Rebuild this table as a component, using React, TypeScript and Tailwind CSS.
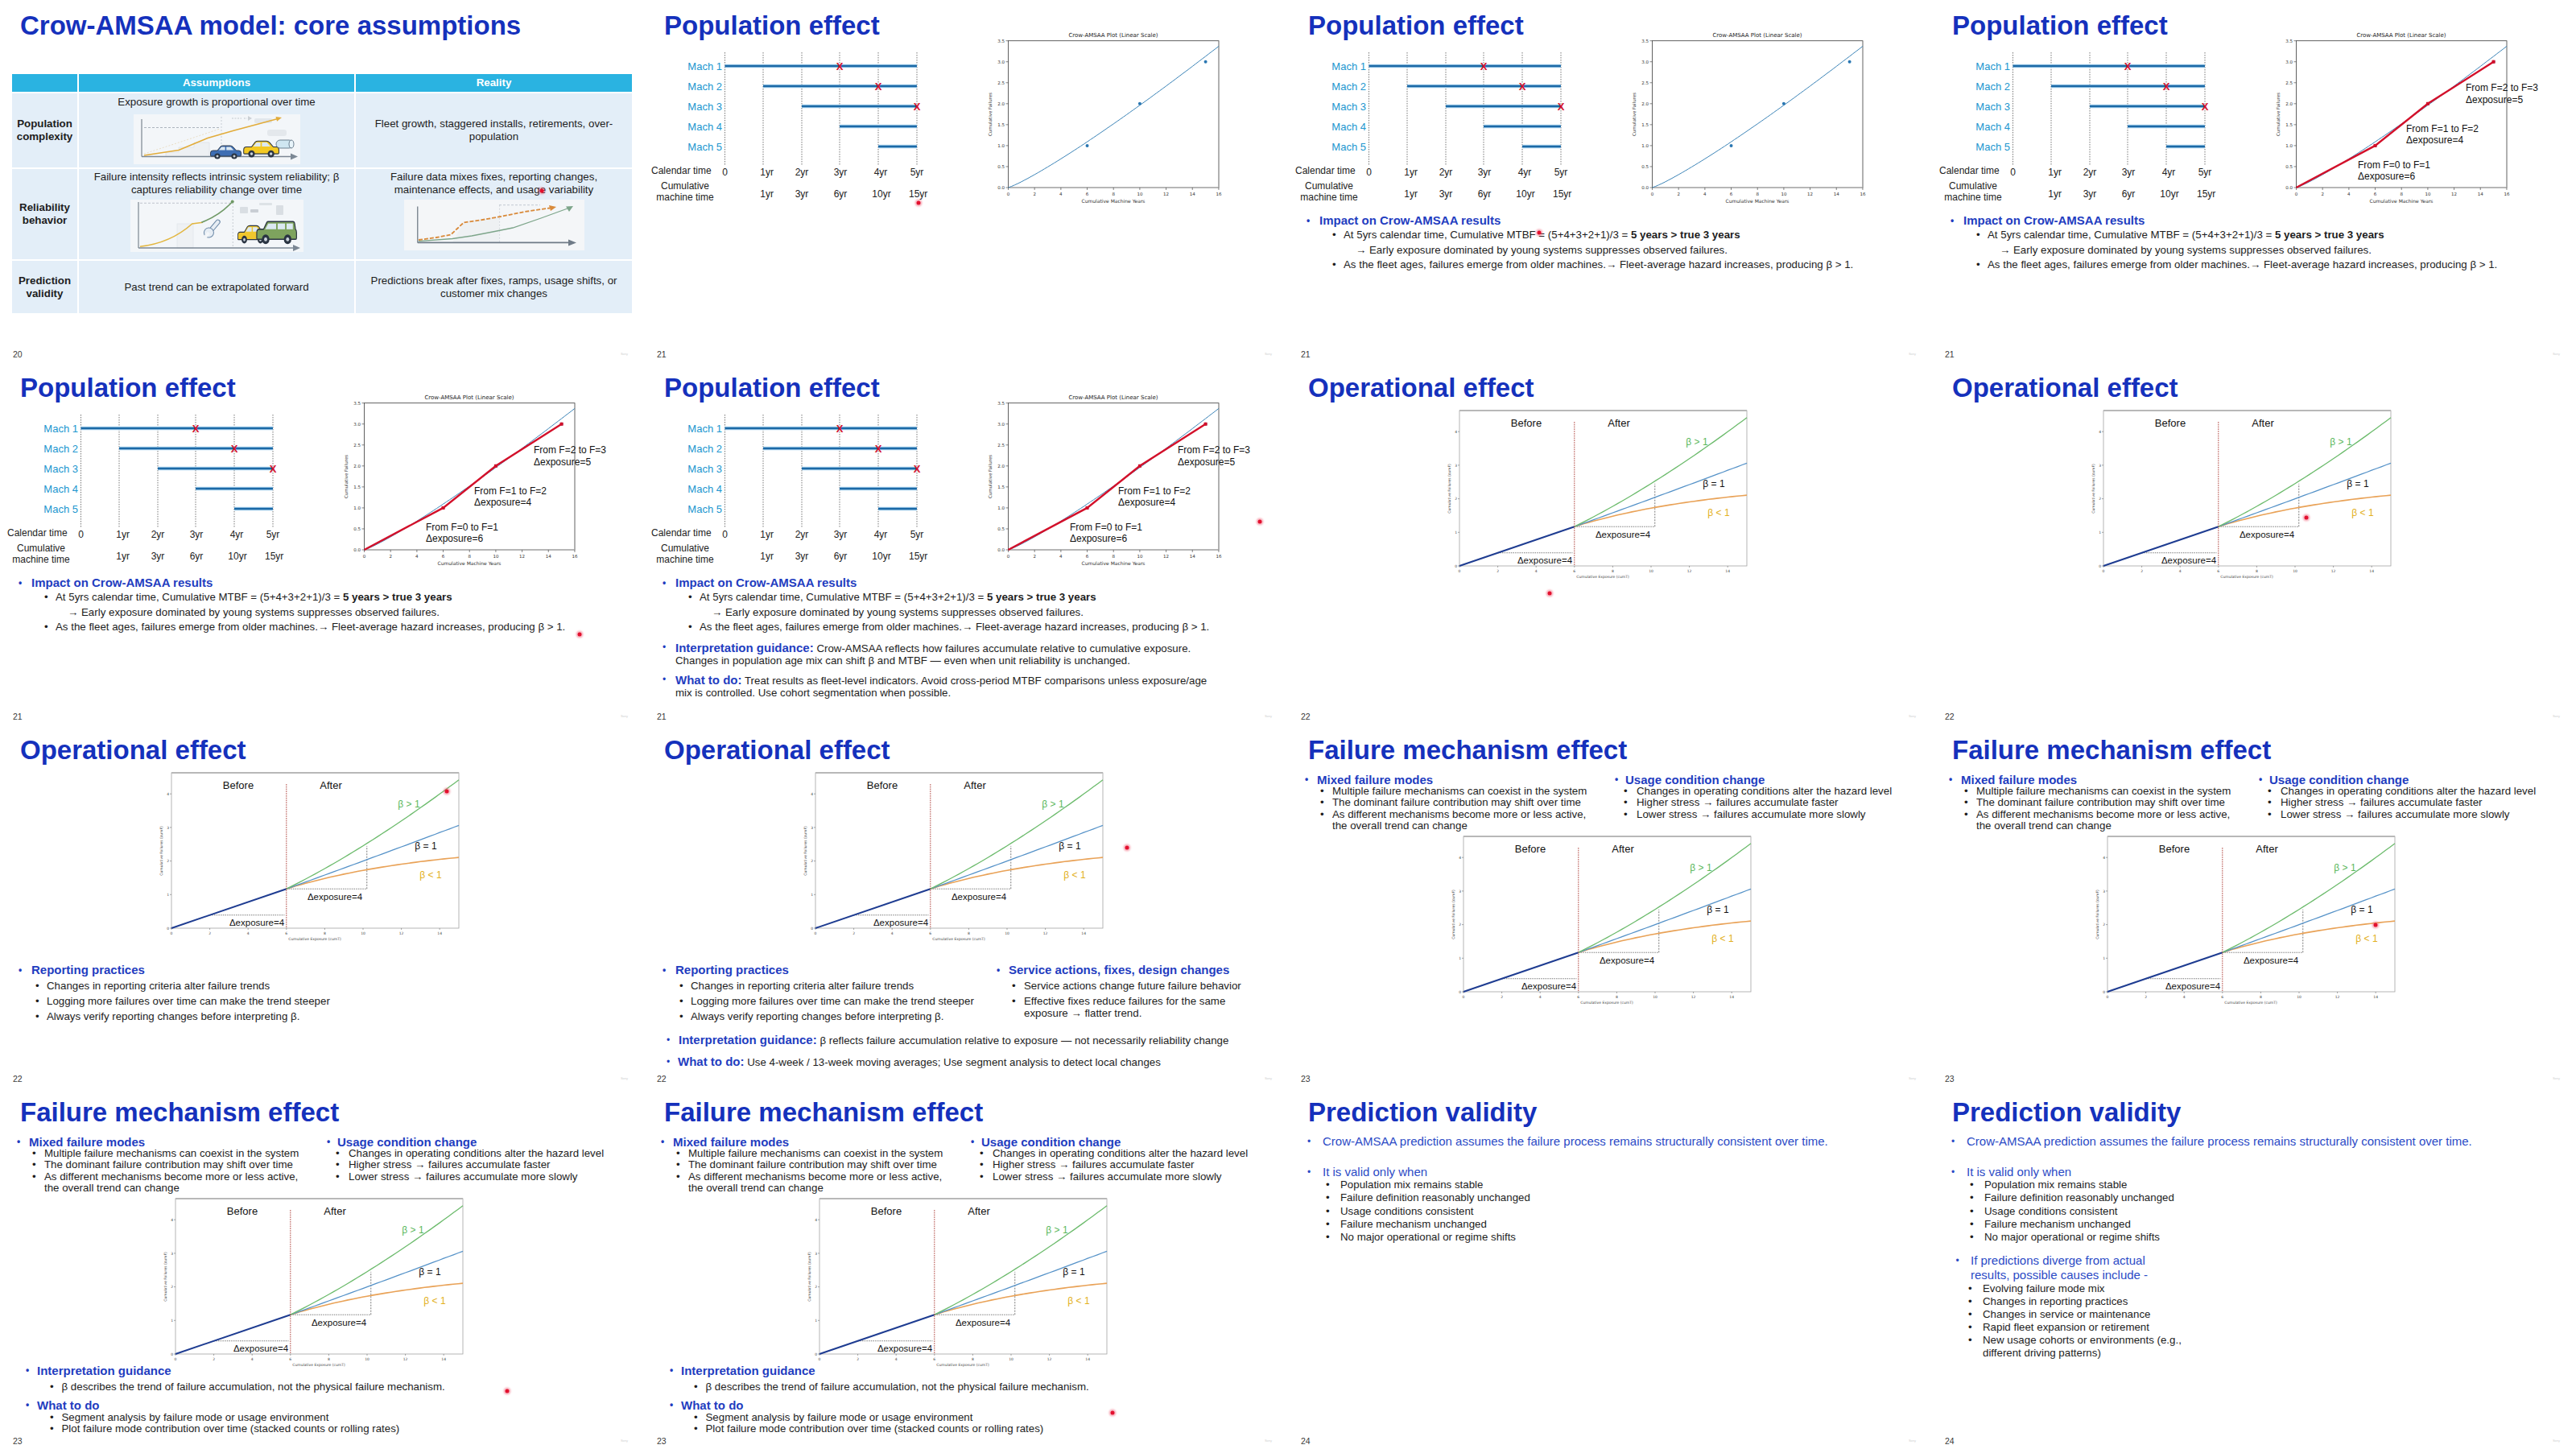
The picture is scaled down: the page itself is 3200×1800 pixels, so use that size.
import type { ReactNode } from "react";

const HEAD = "text-[15px] font-bold text-[#1f3dc0]";
const INK = "text-[#1d1d1d]";
const CELL = "flex items-center justify-center bg-[#e3eef8] text-center";
const TH = "flex items-center justify-center bg-[#2ab3e1] font-bold text-white";

function Bul({ className = "", dot, children }: { className?: string; dot: string; children: ReactNode }) {
  return (
    <div className={`flex ${className}`}>
      <span className={`shrink-0 ${dot}`}>•</span>
      <div>{children}</div>
    </div>
  );
}

function Slide({ num, dot, children }: { num: number; dot?: string; children: ReactNode }) {
  return (
    <section className="relative flex h-[450px] w-[800px] flex-col overflow-hidden bg-white">
      <div className="min-h-0 flex-1 whitespace-nowrap">{children}</div>
      <footer className="flex h-[20px] shrink-0 items-center justify-between pl-[16px] pr-[20px]">
        <span className="text-[10.5px] leading-none text-[#3a3a3a]">{num}</span>
        <span className="text-[4px] leading-none text-[#d0d0d0]">Sony</span>
      </footer>
      {dot ? (
        <span
          className={`absolute h-[5px] w-[5px] -translate-x-1/2 -translate-y-1/2 rounded-full bg-[#e3112f] shadow-[0_0_2px_2px_rgba(240,90,115,0.45)] ${dot}`}
        />
      ) : null}
    </section>
  );
}

function Title({ children }: { children: ReactNode }) {
  return <h1 className="pl-[25px] pt-[15px] text-[33px] font-bold leading-[33px] text-[#1531bc]">{children}</h1>;
}

/* ---------- small table illustrations ---------- */

const SEDAN =
  "M1.5 10Q1.5 7 4.5 7L10 7L14 2Q15 1 17 1L26 1Q28 1 29.5 2.5L33.5 7L36.5 7Q39.5 7 39.5 10L39.5 13Q39.5 14 38.5 14L2.5 14Q1.5 14 1.5 13Z";
const SUV =
  "M1.5 9Q1.5 6.5 4 6.5L8 6.5L11 1.5Q11.5 0.8 12.5 0.8L36 0.8Q37.5 0.8 37.8 2.5L38.5 6.5Q39.5 7 39.5 9L39.5 13Q39.5 14 38.5 14L2.5 14Q1.5 14 1.5 13Z";

function Car({ x, y, w, h, body, suv }: { x: number; y: number; w: number; h: number; body: string; suv?: boolean }) {
  return (
    <g transform={`translate(${x} ${y}) scale(${w / 40} ${h / 18})`}>
      <path d={suv ? SUV : SEDAN} fill={body} stroke="#2a3442" strokeWidth={0.9} />
      {suv ? (
        <>
          <path d="M12.5 2.2H20V6.5H9.6Z" fill="#dbe8f2" />
          <path d="M21.5 2.2H28.5V6.5H21.5Z" fill="#dbe8f2" />
          <path d="M30 2.2H36V6.5H30Z" fill="#dbe8f2" />
        </>
      ) : (
        <>
          <path d="M15.2 2.5H19.6V6.6H11.8Z" fill="#dbe8f2" />
          <path d="M21.2 2.5H26.5L30.4 6.6H21.2Z" fill="#dbe8f2" />
        </>
      )}
      <circle cx={10} cy={14} r={3.6} fill="#2a3442" />
      <circle cx={10} cy={14} r={1.5} fill="#c9d1d9" />
      <circle cx={31} cy={14} r={3.6} fill="#2a3442" />
      <circle cx={31} cy={14} r={1.5} fill="#c9d1d9" />
    </g>
  );
}

function GrowthArt() {
  return (
    <svg width="207" height="62" viewBox="0 0 207 62" className="mt-[7px] block">
      <rect width="207" height="62" fill="#f3f6f9" />
      <rect x="150" y="5" width="22" height="6" rx="2" fill="#e2e7ec" />
      <rect x="166" y="19" width="24" height="8" rx="3" fill="#e4e8ec" />
      <path d="M40 52V47H56V41H75V35H94V52" fill="#edf0f3" stroke="#dde2e7" strokeWidth="0.8" />
      <path d="M13 49Q60 34 107 18" fill="none" stroke="#e6d6b5" strokeWidth="0.8" strokeDasharray="2 2" />
      <line x1="13" y1="16.5" x2="106" y2="16.5" stroke="#9aa4ae" strokeWidth="0.8" strokeDasharray="3 2" />
      <line x1="109" y1="3" x2="109" y2="52" stroke="#b5bcc4" strokeWidth="0.7" strokeDasharray="2 2" />
      <path d="M122 5H134M137 5H141" stroke="#c3c9cf" strokeWidth="1.2" strokeDasharray="2 1.5" />
      <polygon points="142,2 147,5 142,8" fill="#cbd0d5" />
      <line x1="10" y1="6" x2="10" y2="52.5" stroke="#6f7b87" strokeWidth="1.1" />
      <line x1="10" y1="52.5" x2="197" y2="52.5" stroke="#7b8794" strokeWidth="1.6" />
      <polygon points="195,48.5 204,52.5 195,56.5" fill="#7b8794" />
      <polyline points="13,51 56,44.5 74,37 92,29.5 125,20 155,12 178,5.8" fill="none" stroke="#e2ac3a" strokeWidth="1.6" />
      <polygon points="184,4 178.1,8.8 176.5,3" fill="#e2ac3a" />
      <Car x={94} y={38} w={40} h={18} body="#3e6eb3" />
      <Car x={135} y={32} w={46} h={22} body="#f3c923" />
      <rect x="177" y="32" width="21" height="10" rx="5" fill="#cfe6f1" stroke="#4f6577" strokeWidth="0.8" />
      <ellipse cx="196" cy="37" rx="3" ry="5" fill="#e8f4fa" stroke="#4f6577" strokeWidth="0.8" />
    </svg>
  );
}

function FixArt() {
  return (
    <svg width="215" height="65" viewBox="0 0 215 65" className="mt-[4px] block">
      <rect width="215" height="65" fill="#f3f6f9" />
      <rect x="58" y="30" width="20" height="30" fill="#eef1f4" stroke="#e0e5ea" strokeWidth="0.7" />
      <line x1="12" y1="4.3" x2="126" y2="4.3" stroke="#b0b8c0" strokeWidth="0.8" strokeDasharray="3 2" />
      <line x1="127.3" y1="4" x2="127.3" y2="60" stroke="#b5bcc4" strokeWidth="0.7" strokeDasharray="2 2" />
      <rect x="136" y="9" width="10" height="8" rx="1" fill="#d9dee3" />
      <rect x="149" y="12" width="10" height="4" rx="1" fill="#c9ced4" />
      <rect x="160" y="4" width="16" height="3" rx="1" fill="#dde2e6" />
      <rect x="181" y="7" width="9" height="12" rx="1" fill="#d9dee3" />
      <line x1="10" y1="3" x2="10" y2="60" stroke="#6f7b87" strokeWidth="1.1" />
      <line x1="10" y1="60" x2="204" y2="60" stroke="#7b8794" strokeWidth="1.6" />
      <polygon points="202,56 211,60 202,64" fill="#7b8794" />
      <path d="M12 58.3C40 55 60 45 76.7 30L90 28.3" fill="none" stroke="#e2b63f" strokeWidth="1.6" />
      <path d="M88.3 28.3C105 22 118 12 126.7 2.5" fill="none" stroke="#6f9966" strokeWidth="1.6" />
      <circle cx="126.7" cy="2.5" r="2" fill="#6f9966" />
      <g transform="translate(100 38) rotate(-50)">
        <rect x="-2" y="-2.6" width="18" height="5.2" rx="2.6" fill="#e6edf4" stroke="#6d8aa8" strokeWidth="1" />
        <circle cx="-4" cy="0" r="6" fill="#e6edf4" stroke="#6d8aa8" strokeWidth="1" />
        <rect x="-11" y="-2" width="7" height="4" fill="#f3f6f9" />
      </g>
      <Car x={132} y={31} w={38} h={24} body="#f0c72e" />
      <Car x={155} y={26} w={52} h={30} body="#7ea35e" suv />
    </svg>
  );
}

function TrendArt() {
  return (
    <svg width="224" height="63" viewBox="0 0 224 63" className="mt-[4px] block">
      <rect width="224" height="63" fill="#f4f6f8" />
      <polygon points="60,53 74,28.5 118,21 118,53" fill="#eef1f3" />
      <line x1="118" y1="6.7" x2="169" y2="6.7" stroke="#b5bdc5" strokeWidth="0.8" strokeDasharray="3 2" />
      <line x1="118.6" y1="6.7" x2="118.6" y2="53" stroke="#c2c8ce" strokeWidth="0.7" strokeDasharray="2 2" />
      <line x1="16.8" y1="8.4" x2="16.8" y2="53.4" stroke="#5d6975" strokeWidth="1.1" />
      <line x1="16.8" y1="53.4" x2="206" y2="53.4" stroke="#6f7b87" strokeWidth="1.6" />
      <polygon points="204,49.4 214,53.4 204,57.4" fill="#6f7b87" />
      <path d="M18 51.7L60 48.5L84 45L110 40L135 35L170 23L203 11" fill="none" stroke="#7da58a" strokeWidth="1.3" />
      <polygon points="210,8 201,8.5 205,15" fill="#7da58a" />
      <path d="M18 50L40 47L58 43.5L66 36L74 28.5L94 25.6L120 21L150 15L181 10.5" fill="none" stroke="#d98a3a" strokeWidth="1.8" strokeDasharray="5 2" />
      <polygon points="189,9 180,7 182,14" fill="#d98a3a" />
    </svg>
  );
}

/* ---------- slide 20 ---------- */

function AssumptionsSlide() {
  return (
    <>
      <Title>Crow-AMSAA model: core assumptions</Title>
      <div
        className={`ml-[15px] mt-[44px] grid w-[770px] grid-cols-[81px_342px_343px] grid-rows-[22px_92px_112px_65px] gap-[2px] text-[13.3px] leading-[16px] ${INK}`}
      >
        <div className="bg-[#2ab3e1]" />
        <div className={TH}>Assumptions</div>
        <div className={TH}>Reality</div>

        <div className={`${CELL} font-bold`}>
          Population
          <br />
          complexity
        </div>
        <div className="flex flex-col items-center bg-[#e3eef8] pt-[3px]">
          <p>Exposure growth is proportional over time</p>
          <GrowthArt />
        </div>
        <div className={CELL}>
          Fleet growth, staggered installs, retirements, over-
          <br />
          population
        </div>

        <div className={`${CELL} font-bold`}>
          Reliability
          <br />
          behavior
        </div>
        <div className="flex flex-col items-center bg-[#e3eef8] pt-[2px] text-center">
          <p>
            Failure intensity reflects intrinsic system reliability; β
            <br />
            captures reliability change over time
          </p>
          <FixArt />
        </div>
        <div className="flex flex-col items-center bg-[#e3eef8] pt-[2px] text-center">
          <p>
            Failure data mixes fixes, reporting changes,
            <br />
            maintenance effects, and usage variability
          </p>
          <TrendArt />
        </div>

        <div className={`${CELL} font-bold`}>
          Prediction
          <br />
          validity
        </div>
        <div className={CELL}>Past trend can be extrapolated forward</div>
        <div className={CELL}>
          Predictions break after fixes, ramps, usage shifts, or
          <br />
          customer mix changes
        </div>
      </div>
    </>
  );
}

/* ---------- slide 21: population effect ---------- */

const GRID_X = [100.5, 148, 196, 243, 291, 339];
const MACHINES: { y: number; from: number; fail?: number }[] = [
  { y: 82, from: 100.5, fail: 243 },
  { y: 107, from: 148, fail: 291 },
  { y: 132, from: 196, fail: 339 },
  { y: 157, from: 243 },
  { y: 182, from: 291 },
];
const CAL: [string, number][] = [
  ["0", 100.5],
  ["1yr", 152.6],
  ["2yr", 196],
  ["3yr", 244],
  ["4yr", 294],
  ["5yr", 339],
];
const CUM: [string, number][] = [
  ["1yr", 152.6],
  ["3yr", 196],
  ["6yr", 244],
  ["10yr", 295],
  ["15yr", 340.7],
];

function Timeline() {
  return (
    <svg width="370" height="195" viewBox="0 60 370 195" className="mt-[12px] block">
      {GRID_X.map((x) => (
        <line key={x} x1={x} y1={65} x2={x} y2={206} stroke="#555" strokeWidth={0.8} strokeDasharray="1.5 1.5" />
      ))}
      {MACHINES.map((m, i) => (
        <g key={i}>
          <text x={97} y={m.y + 4.7} textAnchor="end" fontSize={13} fill="#2196cf">
            Mach {i + 1}
          </text>
          <line x1={m.from} y1={m.y} x2={339} y2={m.y} stroke="#a7d2ee" strokeWidth={4.6} />
          <line x1={m.from} y1={m.y} x2={339} y2={m.y} stroke="#1c69a6" strokeWidth={2.4} />
          {m.fail !== undefined && (
            <text x={m.fail} y={m.y + 4.8} textAnchor="middle" fontSize={13} fontWeight={700} fill="#d3102c">
              X
            </text>
          )}
        </g>
      ))}
      <text x={9} y={216.3} fontSize={12} fill="#222">
        Calendar time
      </text>
      {CAL.map(([s, x]) => (
        <text key={s} x={x} y={218.3} textAnchor="middle" fontSize={12} fill="#222">
          {s}
        </text>
      ))}
      <text x={51} y={235.3} textAnchor="middle" fontSize={12} fill="#222">
        Cumulative
      </text>
      <text x={51} y={249.3} textAnchor="middle" fontSize={12} fill="#222">
        machine time
      </text>
      {CUM.map(([s, x]) => (
        <text key={s} x={x} y={245.3} textAnchor="middle" fontSize={12} fill="#222">
          {s}
        </text>
      ))}
    </svg>
  );
}

function CrowPlot({ segments }: { segments?: boolean }) {
  const px = (t: number) => 452.5 + 16.34 * t;
  const py = (n: number) => 233 - 52.09 * n;
  let fit = "";
  for (let i = 0; i <= 64; i++) {
    const t = i / 4;
    fit += `${i ? "L" : "M"}${px(t).toFixed(1)} ${py(0.139 * Math.pow(t, 1.15)).toFixed(1)}`;
  }
  const pts: [number, number][] = [
    [6, 1],
    [10, 2],
    [15, 3],
  ];
  const tick = { fontSize: 5.5, fontFamily: "DejaVu Sans", fill: "#333" };
  return (
    <svg width="400" height="220" viewBox="400 35 400 220" className="mt-[35px] block shrink-0">
      <text x={583} y={45.5} textAnchor="middle" fontSize={7} fontFamily="DejaVu Sans" fill="#222">
        Crow-AMSAA Plot (Linear Scale)
      </text>
      <rect x={452.5} y={50.7} width={261.5} height={182.3} fill="none" stroke="#3a3a3a" strokeWidth={0.8} />
      <line x1={452.5} y1={233} x2={714} y2={233} stroke="#b9b9b9" strokeWidth={1.4} />
      {[0, 0.5, 1, 1.5, 2, 2.5, 3, 3.5].map((v) => (
        <g key={v}>
          <line x1={449.5} x2={452.5} y1={py(v)} y2={py(v)} stroke="#333" strokeWidth={0.6} />
          <text x={448} y={py(v) + 2} textAnchor="end" {...tick}>
            {v.toFixed(1)}
          </text>
        </g>
      ))}
      {[0, 2, 4, 6, 8, 10, 12, 14, 16].map((t) => (
        <g key={t}>
          <line x1={px(t)} x2={px(t)} y1={233} y2={236} stroke="#333" strokeWidth={0.6} />
          <text x={px(t)} y={243} textAnchor="middle" {...tick}>
            {t}
          </text>
        </g>
      ))}
      <text x={583} y={252} textAnchor="middle" fontSize={6} fontFamily="DejaVu Sans" fill="#333">
        Cumulative Machine Years
      </text>
      <text transform="rotate(-90 430 142)" x={430} y={144} textAnchor="middle" {...tick}>
        Cumulative Failures
      </text>
      <path d={fit} fill="none" stroke="#3d85b8" strokeWidth={1} />
      {pts.map(([t, n]) => (
        <circle key={t} cx={px(t)} cy={py(n)} r={2} fill="#2a77b2" />
      ))}
      {segments && (
        <g>
          <polyline
            points={`${px(0)},${py(0)} ${px(6)},${py(1)} ${px(10)},${py(2)} ${px(15)},${py(3)}`}
            fill="none"
            stroke="#d3102a"
            strokeWidth={2.4}
          />
          {pts.map(([t, n]) => (
            <rect key={t} x={px(t) - 2} y={py(n) - 2} width={4} height={4} fill="#d3102a" />
          ))}
          <g fontSize={12} fill="#111">
            <text x={529} y={209.3}>From F=0 to F=1</text>
            <text x={529} y={223.3}>Δexposure=6</text>
            <text x={589} y={164.3}>From F=1 to F=2</text>
            <text x={589} y={178.3}>Δexposure=4</text>
            <text x={663} y={113.3}>From F=2 to F=3</text>
            <text x={663} y={128.3}>Δexposure=5</text>
          </g>
        </g>
      )}
    </svg>
  );
}

function PopulationSlide({ segments, impact, guidance }: { segments?: boolean; impact?: boolean; guidance?: boolean }) {
  return (
    <>
      <div className="flex">
        <div className="w-[400px] shrink-0">
          <Title>Population effect</Title>
          <Timeline />
        </div>
        <CrowPlot segments={segments} />
      </div>
      {impact && (
        <div className={`mt-[10px] text-[13.3px] ${INK}`}>
          <Bul className={`pl-[23px] leading-[18px] ${HEAD}`} dot="w-[16px] text-[12px]">
            Impact on Crow-AMSAA results
          </Bul>
          <div className="pl-[55px] leading-[18.6px]">
            <Bul dot="w-[14px]">
              At 5yrs calendar time, Cumulative MTBF = (5+4+3+2+1)/3 = <b>5 years &gt; true 3 years</b>
            </Bul>
            <div className="pl-[29px]">→ Early exposure dominated by young systems suppresses observed failures.</div>
            <Bul dot="w-[14px]">
              As the fleet ages, failures emerge from older machines.→ Fleet-average hazard increases, producing β &gt; 1.
            </Bul>
          </div>
        </div>
      )}
      {guidance && (
        <div className={`text-[13.3px] leading-[15px] ${INK}`}>
          <Bul className="mt-[8.5px] pl-[23px]" dot="w-[16px] text-[12px] text-[#1f3dc0]">
            <span className={HEAD}>Interpretation guidance:</span> Crow-AMSAA reflects how failures accumulate relative to
            cumulative exposure.
            <br />
            Changes in population age mix can shift β and MTBF — even when unit reliability is unchanged.
          </Bul>
          <Bul className="mt-[8.5px] pl-[23px]" dot="w-[16px] text-[12px] text-[#1f3dc0]">
            <span className={HEAD}>What to do:</span> Treat results as fleet-level indicators. Avoid cross-period MTBF
            comparisons unless exposure/age
            <br />
            mix is controlled. Use cohort segmentation when possible.
          </Bul>
        </div>
      )}
    </>
  );
}

/* ---------- shared exposure chart (slides 22, 23) ---------- */

function ExposureChart({ className = "" }: { className?: string }) {
  const X = (t: number) => 23 + 23.8 * t;
  const Y = (n: number) => 198 - 41.7 * n;
  const n0 = 1.17;
  const after = (f: (t: number) => number) => {
    let d = "";
    for (let i = 0; i <= 36; i++) {
      const t = 6 + i * 0.25;
      d += `${i ? "L" : "M"}${X(t).toFixed(1)} ${Y(f(t)).toFixed(1)}`;
    }
    return d;
  };
  const tick = { fontSize: 4.5, fontFamily: "DejaVu Sans", fill: "#444" };
  return (
    <svg width="390" height="215" viewBox="0 0 390 215" className={`block ${className}`}>
      <rect x={23} y={5} width={357} height={193} fill="none" stroke="#a3a3a3" strokeWidth={0.8} />
      <line x1={23} y1={5} x2={380} y2={5} stroke="#b8b8b8" strokeWidth={2} />
      {[0, 1, 2, 3, 4].map((n) => (
        <g key={n}>
          <line x1={21} x2={23} y1={Y(n)} y2={Y(n)} stroke="#555" strokeWidth={0.5} />
          <text x={20} y={Y(n) + 1.6} textAnchor="end" {...tick}>
            {n}
          </text>
        </g>
      ))}
      {[0, 2, 4, 6, 8, 10, 12, 14].map((t) => (
        <g key={t}>
          <line x1={X(t)} x2={X(t)} y1={198} y2={200} stroke="#555" strokeWidth={0.5} />
          <text x={X(t)} y={205.6} textAnchor="middle" {...tick}>
            {t}
          </text>
        </g>
      ))}
      <text x={201} y={212.6} textAnchor="middle" {...tick}>
        Cumulative Exposure (cumT)
      </text>
      <text transform="rotate(-90 10 102)" x={10} y={103.6} textAnchor="middle" {...tick}>
        Cumulative Failures (cumF)
      </text>

      <line x1={X(2)} y1={Y(0.39)} x2={X(5.9)} y2={Y(0.39)} stroke="#444" strokeWidth={0.7} strokeDasharray="1.5 1.2" />
      <line x1={X(6)} y1={Y(n0)} x2={X(10.2)} y2={Y(n0)} stroke="#444" strokeWidth={0.7} strokeDasharray="1.5 1.2" />
      <line x1={X(10.2)} y1={Y(n0)} x2={X(10.2)} y2={Y(2.45)} stroke="#444" strokeWidth={0.7} strokeDasharray="2 1.5" />

      <line x1={X(0)} y1={Y(0)} x2={X(6)} y2={Y(n0)} stroke="#1e3c91" strokeWidth={2} />
      <path d={after((t) => n0 + 1.36 * (1 - Math.exp(-0.13 * (t - 6))))} fill="none" stroke="#e9a257" strokeWidth={1.6} />
      <path d={after((t) => n0 * Math.pow(t / 6, 1.05))} fill="none" stroke="#5592c8" strokeWidth={1.3} />
      <path d={after((t) => n0 * Math.pow(t / 6, 1.45))} fill="none" stroke="#6cbb6c" strokeWidth={1.3} />
      <line x1={X(6)} y1={19} x2={X(6)} y2={198} stroke="#a8322b" strokeWidth={0.9} strokeDasharray="1.6 1.2" />

      <text x={106} y={24.7} textAnchor="middle" fontSize={13} fill="#111">
        Before
      </text>
      <text x={221} y={24.7} textAnchor="middle" fontSize={13} fill="#111">
        After
      </text>
      <text x={129} y={195.3} textAnchor="middle" fontSize={11.5} fill="#111">
        Δexposure=4
      </text>
      <text x={226} y={163.3} textAnchor="middle" fontSize={11.5} fill="#111">
        Δexposure=4
      </text>
      <text x={318} y={48.3} textAnchor="middle" fontSize={12} fill="#5cb85c">
        β &gt; 1
      </text>
      <text x={339} y={100.3} textAnchor="middle" fontSize={12} fill="#111">
        β = 1
      </text>
      <text x={345} y={136.3} textAnchor="middle" fontSize={12} fill="#e3b020">
        β &lt; 1
      </text>
    </svg>
  );
}

/* ---------- slide 22: operational effect ---------- */

function OperationalSlide({ reporting, service }: { reporting?: boolean; service?: boolean }) {
  return (
    <>
      <Title>Operational effect</Title>
      <ExposureChart className="ml-[190px] mt-[7px]" />
      {reporting && (
        <div className={`mt-[26px] flex text-[13.3px] ${INK}`}>
          <div className="w-[420px] shrink-0">
            <Bul className={`pl-[23px] leading-[18px] ${HEAD}`} dot="w-[16px] text-[12px]">
              Reporting practices
            </Bul>
            <div className="mt-[2.5px] space-y-[4px] pl-[44px] leading-[15px]">
              <Bul dot="w-[14px]">Changes in reporting criteria alter failure trends</Bul>
              <Bul dot="w-[14px]">Logging more failures over time can make the trend steeper</Bul>
              <Bul dot="w-[14px]">Always verify reporting changes before interpreting β.</Bul>
            </div>
          </div>
          {service && (
            <div>
              <Bul className={`pl-[18px] leading-[18px] ${HEAD}`} dot="w-[15px] text-[12px]">
                Service actions, fixes, design changes
              </Bul>
              <div className="mt-[2.5px] space-y-[4px] pl-[37px] leading-[15px]">
                <Bul dot="w-[15px]">Service actions change future failure behavior</Bul>
                <Bul dot="w-[15px]">
                  Effective fixes reduce failures for the same
                  <br />
                  exposure → flatter trend.
                </Bul>
              </div>
            </div>
          )}
        </div>
      )}
      {service && (
        <div className={`text-[13.3px] leading-[18px] ${INK}`}>
          <Bul className="mt-[13.5px] pl-[28px]" dot="w-[15px] text-[12px] text-[#1f3dc0]">
            <span className={HEAD}>Interpretation guidance:</span> β reflects failure accumulation relative to exposure — not
            necessarily reliability change
          </Bul>
          <Bul className="mt-[8px] pl-[28px]" dot="w-[14px] text-[12px] text-[#1f3dc0]">
            <span className={HEAD}>What to do:</span> Use 4-week / 13-week moving averages; Use segment analysis to detect
            local changes
          </Bul>
        </div>
      )}
    </>
  );
}

/* ---------- slide 23: failure mechanism effect ---------- */

function MechanismSlide({ guidance }: { guidance?: boolean }) {
  return (
    <>
      <Title>Failure mechanism effect</Title>
      <div className={`mt-[12.5px] flex text-[13.3px] leading-[14.5px] ${INK}`}>
        <div className="w-[385px] shrink-0">
          <Bul className={`pl-[21px] leading-[15px] ${HEAD}`} dot="w-[15px] text-[12px]">
            Mixed failure modes
          </Bul>
          <div className="pl-[40px]">
            <Bul dot="w-[15px]">Multiple failure mechanisms can coexist in the system</Bul>
            <Bul dot="w-[15px]">The dominant failure contribution may shift over time</Bul>
            <Bul dot="w-[15px]">
              As different mechanisms become more or less active,
              <br />
              the overall trend can change
            </Bul>
          </div>
        </div>
        <div>
          <Bul className={`pl-[21px] leading-[15px] ${HEAD}`} dot="w-[13px] text-[12px]">
            Usage condition change
          </Bul>
          <div className="pl-[32px]">
            <Bul dot="w-[16px]">Changes in operating conditions alter the hazard level</Bul>
            <Bul dot="w-[16px]">Higher stress → failures accumulate faster</Bul>
            <Bul dot="w-[16px]">Lower stress → failures accumulate more slowly</Bul>
          </div>
        </div>
      </div>
      <ExposureChart className="ml-[195px]" />
      {guidance && (
        <div className={`mt-[-4px] text-[13.3px] ${INK}`}>
          <Bul className={`pl-[32px] leading-[15px] ${HEAD}`} dot="w-[14px] text-[12px]">
            Interpretation guidance
          </Bul>
          <Bul className="mt-[5px] pl-[62px] leading-[15px]" dot="w-[14.5px]">
            β describes the trend of failure accumulation, not the physical failure mechanism.
          </Bul>
          <Bul className={`mt-[8px] pl-[32px] leading-[15px] ${HEAD}`} dot="w-[14px] text-[12px]">
            What to do
          </Bul>
          <div className="mt-[1.5px] pl-[62px] leading-[14px]">
            <Bul dot="w-[14.5px]">Segment analysis by failure mode or usage environment</Bul>
            <Bul dot="w-[14.5px]">Plot failure mode contribution over time (stacked counts or rolling rates)</Bul>
          </div>
        </div>
      )}
    </>
  );
}

/* ---------- slide 24: prediction validity ---------- */

function PredictionSlide({ causes }: { causes?: boolean }) {
  return (
    <>
      <Title>Prediction validity</Title>
      <div className="mt-[11px] text-[15px] leading-[18px] text-[#2c4bc6]">
        <Bul className="pl-[24px]" dot="w-[19px] text-[12px]">
          Crow-AMSAA prediction assumes the failure process remains structurally consistent over time.
        </Bul>
        <Bul className="mt-[21px] pl-[24px] leading-[16px]" dot="w-[19px] text-[12px]">
          It is valid only when
        </Bul>
        <div className={`pl-[47px] text-[13.3px] leading-[16.25px] ${INK}`}>
          <Bul dot="w-[18px]">Population mix remains stable</Bul>
          <Bul dot="w-[18px]">Failure definition reasonably unchanged</Bul>
          <Bul dot="w-[18px]">Usage conditions consistent</Bul>
          <Bul dot="w-[18px]">Failure mechanism unchanged</Bul>
          <Bul dot="w-[18px]">No major operational or regime shifts</Bul>
        </div>
        {causes && (
          <>
            <Bul className="mt-[11.75px] pl-[29.5px]" dot="w-[18.5px] text-[12px]">
              If predictions diverge from actual
              <br />
              results, possible causes include -
            </Bul>
            <div className={`pl-[45px] text-[13.3px] leading-[16px] ${INK}`}>
              <Bul dot="w-[18px]">Evolving failure mode mix</Bul>
              <Bul dot="w-[18px]">Changes in reporting practices</Bul>
              <Bul dot="w-[18px]">Changes in service or maintenance</Bul>
              <Bul dot="w-[18px]">Rapid fleet expansion or retirement</Bul>
              <Bul dot="w-[18px]">
                New usage cohorts or environments (e.g.,
                <br />
                different driving patterns)
              </Bul>
            </div>
          </>
        )}
      </div>
    </>
  );
}

export default function App() {
  return (
    <div className="grid h-[1800px] w-[3200px] grid-cols-[repeat(4,800px)] grid-rows-[repeat(4,450px)] bg-white font-['Liberation_Sans',Arial,sans-serif]">
      <Slide num={20} dot="left-[673px] top-[237px]">
        <AssumptionsSlide />
      </Slide>
      <Slide num={21} dot="left-[341px] top-[252px]">
        <PopulationSlide />
      </Slide>
      <Slide num={21} dot="left-[312px] top-[289px]">
        <PopulationSlide impact />
      </Slide>
      <Slide num={21}>
        <PopulationSlide segments impact />
      </Slide>

      <Slide num={21} dot="left-[720px] top-[338px]">
        <PopulationSlide segments impact />
      </Slide>
      <Slide num={21} dot="left-[765px] top-[198px]">
        <PopulationSlide segments impact guidance />
      </Slide>
      <Slide num={22} dot="left-[325px] top-[287px]">
        <OperationalSlide />
      </Slide>
      <Slide num={22} dot="left-[465px] top-[193px]">
        <OperationalSlide />
      </Slide>

      <Slide num={22} dot="left-[555px] top-[83px]">
        <OperationalSlide reporting />
      </Slide>
      <Slide num={22} dot="left-[600px] top-[153px]">
        <OperationalSlide reporting service />
      </Slide>
      <Slide num={23}>
        <MechanismSlide />
      </Slide>
      <Slide num={23} dot="left-[551px] top-[249px]">
        <MechanismSlide />
      </Slide>

      <Slide num={23} dot="left-[630px] top-[378px]">
        <MechanismSlide guidance />
      </Slide>
      <Slide num={23} dot="left-[582px] top-[405px]">
        <MechanismSlide guidance />
      </Slide>
      <Slide num={24}>
        <PredictionSlide />
      </Slide>
      <Slide num={24}>
        <PredictionSlide causes />
      </Slide>
    </div>
  );
}
